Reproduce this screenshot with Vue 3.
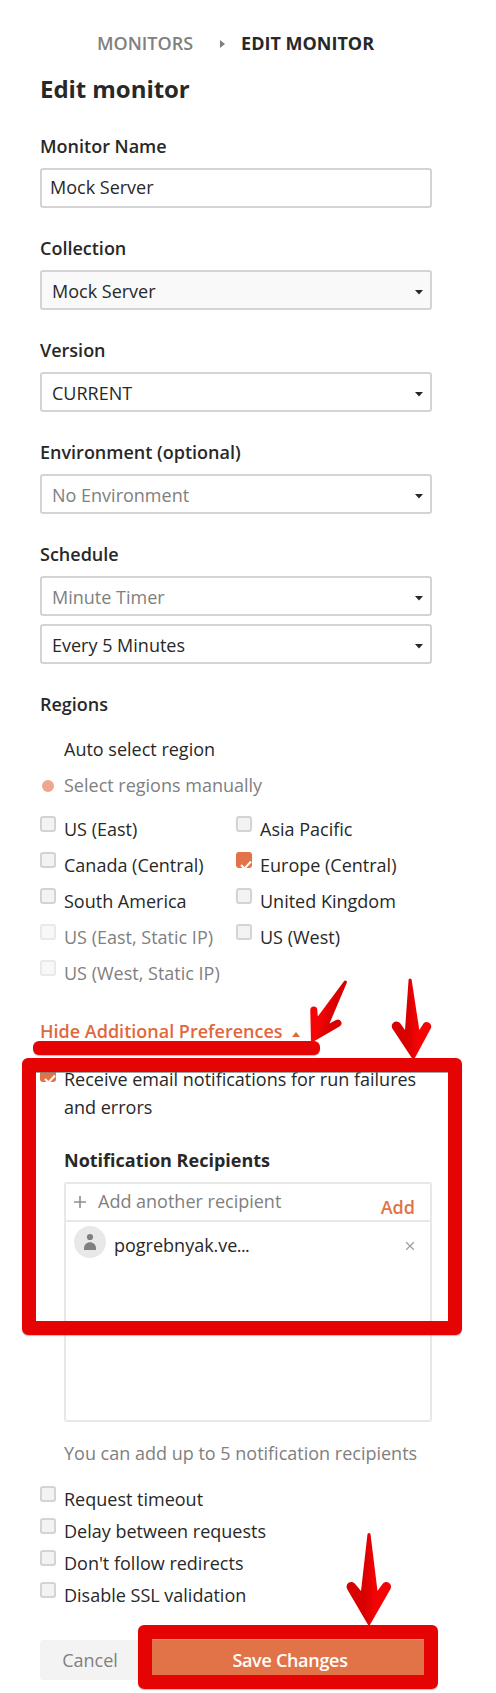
<script setup>
const fields = [
  { label: 'Monitor Name', boxes: [{ text: 'Mock Server', kind: 'input' }] },
  { label: 'Collection', boxes: [{ text: 'Mock Server', kind: 'select shaded' }] },
  { label: 'Version', boxes: [{ text: 'CURRENT', kind: 'select' }] },
  { label: 'Environment (optional)', boxes: [{ text: 'No Environment', kind: 'select muted' }] },
  { label: 'Schedule', boxes: [{ text: 'Minute Timer', kind: 'select muted' }, { text: 'Every 5 Minutes', kind: 'select' }] }
]
const regions = [
  [{ name: 'US (East)' }, { name: 'Canada (Central)' }, { name: 'South America' }, { name: 'US (East, Static IP)', disabled: true }, { name: 'US (West, Static IP)', disabled: true }],
  [{ name: 'Asia Pacific' }, { name: 'Europe (Central)', checked: true }, { name: 'United Kingdom' }, { name: 'US (West)' }]
]
const options = ['Request timeout', 'Delay between requests', "Don't follow redirects", 'Disable SSL validation']
</script>

<template>
  <main class="page">
    <nav class="crumbs">
      <span class="crumb">MONITORS</span>
      <svg class="crumb-arrow" width="5" height="8"><path d="M0 0L5 4L0 8Z" fill="#808080" /></svg>
      <span class="crumb current">EDIT MONITOR</span>
    </nav>
    <h1 class="title">Edit monitor</h1>

    <section v-for="f in fields" :key="f.label" class="field">
      <div class="label">{{ f.label }}</div>
      <div class="boxes">
        <div v-for="b in f.boxes" :key="b.text" class="box" :class="b.kind">
          <span>{{ b.text }}</span>
          <svg v-if="b.kind !== 'input'" class="caret" width="8" height="5"><path d="M0 0H8L4 4.5Z" fill="#282828" /></svg>
        </div>
      </div>
    </section>

    <div class="label">Regions</div>
    <div class="radios">
      <div class="radio"><i class="dot off"></i>Auto select region</div>
      <div class="radio muted"><i class="dot"></i>Select regions manually</div>
    </div>
    <div class="regions">
      <div v-for="(col, i) in regions" :key="i">
        <div v-for="r in col" :key="r.name" class="check-row" :class="{ disabled: r.disabled }">
          <span class="check" :class="{ checked: r.checked }">
            <svg v-if="r.checked" width="16" height="16"><path d="M5 13L8.5 16.5L15 9.5" fill="none" stroke="#fff" stroke-width="2" /></svg>
          </span>
          <span class="name">{{ r.name }}</span>
        </div>
      </div>
    </div>

    <div class="toggle">
      <span>Hide Additional Preferences</span>
      <svg class="up" width="8" height="5"><path d="M0 5H8L4 0Z" fill="#e2673d" /></svg>
    </div>

    <div class="notify">
      <span class="check checked">
        <svg width="16" height="16"><path d="M5 13L8.5 16.5L15 9.5" fill="none" stroke="#fff" stroke-width="2" /></svg>
      </span>
      <p class="notify-text">Receive email notifications for run failures<br />and errors</p>
    </div>

    <div class="recipients">
      <div class="label strong">Notification Recipients</div>
      <div class="list">
        <div class="adder">
          <svg width="12" height="12"><path d="M6 0V12M0 6H12" stroke="#8e8e8e" stroke-width="1.6" /></svg>
          <span class="placeholder">Add another recipient</span>
          <span class="add">Add</span>
        </div>
        <div class="person">
          <svg width="32" height="32">
            <circle cx="16" cy="16" r="16" fill="#e8e8e8" />
            <circle cx="16" cy="11" r="3.1" fill="#808080" />
            <path d="M10 24V22.5C10 14 22 14 22 22.5V24Z" fill="#808080" />
          </svg>
          <span class="person-name">pogrebnyak.v<span class="tight">e...</span></span>
          <svg class="remove" width="8" height="8"><path d="M0 0L8 8M8 0L0 8" stroke="#a0a0a0" stroke-width="1.3" /></svg>
        </div>
      </div>
      <div class="hint">You can add up to 5 notification recipients</div>
    </div>

    <div class="options">
      <div v-for="o in options" :key="o" class="check-row"><span class="check"></span><span class="name">{{ o }}</span></div>
    </div>

    <div class="actions">
      <div class="btn cancel">Cancel</div>
      <div class="btn save">Save Changes</div>
    </div>

    <div class="mark underline"></div>
    <div class="mark frame prefs"></div>
    <div class="mark frame submit"></div>
    <svg class="arrows" width="496" height="1693">
      <defs>
        <linearGradient id="g1"><stop offset="0.4" stop-color="#d80000" /><stop offset="0.65" stop-color="#f40404" /></linearGradient>
        <linearGradient id="g2" x1="0" y1="0.3" x2="1" y2="0.7"><stop offset="0.35" stop-color="#f40404" /><stop offset="0.6" stop-color="#d80000" /></linearGradient>
      </defs>
      <path d="M343.8 981.500A1.600 1.600 0 0 1 346.700 983L329.500 1023.500L336 1020A3.600 3.600 0 0 1 339.500 1026.500L311 1043L310.300 1010A3.500 3.500 0 0 1 317.300 1010L317.800 1016.500Z" fill="url(#g2)" />
      <path d="M408.600 979.500Q410 977.500 411.600 979.500L419.300 1030L424 1022.800A4.600 4.600 0 0 1 431 1028L413.500 1060.500L393 1029.500A4.600 4.600 0 0 1 400 1023L405 1030Z" fill="url(#g1)" />
      <path d="M367.500 1534Q369 1532 370.500 1534L377.500 1591L382.500 1584A4.600 4.600 0 0 1 390.200 1589.500L369 1626.500L347.400 1589.500A4.600 4.600 0 0 1 355.200 1584L361 1591Z" fill="url(#g1)" />
    </svg>
  </main>
</template>

<style>
body { margin: 0; background: #fff; }
</style>

<style scoped>
.page { position: relative; box-sizing: border-box; width: 496px; height: 1693px; overflow: hidden; padding: 31px 64px 0 40px; background: #fff; color: #282828; font: 18px/24px "Open Sans", sans-serif; }
svg { display: block; flex: none; }
.crumbs { display: flex; align-items: center; height: 24px; padding-left: 57px; font-weight: 600; color: #808080; white-space: nowrap; }
.crumb-arrow { margin: 2px 16px 0 27px; }
.current { color: #282828; font-weight: 700; }
.title { margin: 18px 0 29px; font-size: 24px; line-height: 32px; font-weight: 700; letter-spacing: -0.05px; }
.field { margin-bottom: 28px; }
.label { font-weight: 600; }
.label.strong { font-weight: 700; }
.boxes { display: flex; flex-direction: column; gap: 8px; margin-top: 10px; }
.box { box-sizing: border-box; display: flex; align-items: center; justify-content: space-between; height: 40px; border: 2px solid #d4d4d4; border-radius: 3px; padding: 2px 7px 0 10px; }
.box.input { padding: 0 8px 2px; }
.shaded { background: #f9f9f9; }
.muted { color: #808080; }
.caret { margin-top: 2px; }
.radios { margin-top: 15px; }
.radio { display: flex; align-items: center; height: 36px; }
.dot { width: 12px; height: 12px; margin: 1px 10px 0 2px; border-radius: 50%; background: #eea68e; }
.dot.off { background: transparent; }
.regions { display: grid; grid-template-columns: 196px 196px; margin-top: 8px; height: 180px; }
.check-row { display: flex; height: 36px; white-space: nowrap; }
.check { box-sizing: border-box; flex: none; width: 16px; height: 16px; margin-top: 5px; border: 2px solid #d4d4d4; border-radius: 3px; background: #f3f3f3; overflow: hidden; }
.check.checked { border: 0; background: #e27349; }
.name { margin: 6px 0 0 8px; }
.disabled .check { opacity: .5; }
.disabled .name { color: #808080; }
.toggle { display: flex; align-items: center; margin-top: 28px; height: 24px; font-weight: 600; color: #e2673d; }
.up { margin: 7px 0 0 9px; }
.notify { display: flex; margin-top: 22px; height: 56px; }
.notify .check { margin-top: 1px; }
.notify-text { margin: 0 0 0 8px; line-height: 28px; white-space: nowrap; }
.recipients { margin: 27px 0 0 24px; }
.list { box-sizing: border-box; height: 240px; margin-top: 10px; border: 2px solid #e8e8e8; border-radius: 3px; }
.adder { display: flex; align-items: center; height: 36px; border-bottom: 2px solid #e8e8e8; padding: 0 15px 0 8px; color: #808080; }
.placeholder { margin: 0 auto 0 12px; padding-bottom: 2px; }
.add { padding-top: 10px; font-weight: 600; color: #e27349; }
.person { display: flex; padding: 4px 16px 0 8px; }
.person-name { margin: 7px auto 0 8px; }
.tight { letter-spacing: -0.6px; }
.remove { margin-top: 16px; }
.hint { margin-top: 19px; color: #808080; white-space: nowrap; }
.options { margin-top: 18px; }
.options .check-row { height: 32px; }
.options .check { margin-top: 3px; }
.options .name { margin-top: 4px; }
.actions { display: flex; gap: 8px; margin-top: 29px; }
.btn { height: 40px; line-height: 40px; border-radius: 3px; text-align: center; }
.cancel { width: 100px; background: #f3f3f3; color: #808080; }
.save { flex: 1; background: #e27349; color: #fff; font-weight: 600; letter-spacing: -0.3px; }
.mark { position: absolute; box-sizing: border-box; }
.underline { left: 33px; top: 1041px; width: 287px; height: 14px; border-radius: 6px; background: #e60303; box-shadow: 0 1px 1px #7777; }
.frame { border: 14px solid #e60303; border-radius: 6px; box-shadow: 0 1px 1px #7777, inset 0 1px 0 #777a; }
.prefs { left: 22px; top: 1058px; width: 440px; height: 277px; }
.submit { left: 138px; top: 1625px; width: 300px; height: 64px; }
.arrows { position: absolute; left: 0; top: 0; }
</style>
